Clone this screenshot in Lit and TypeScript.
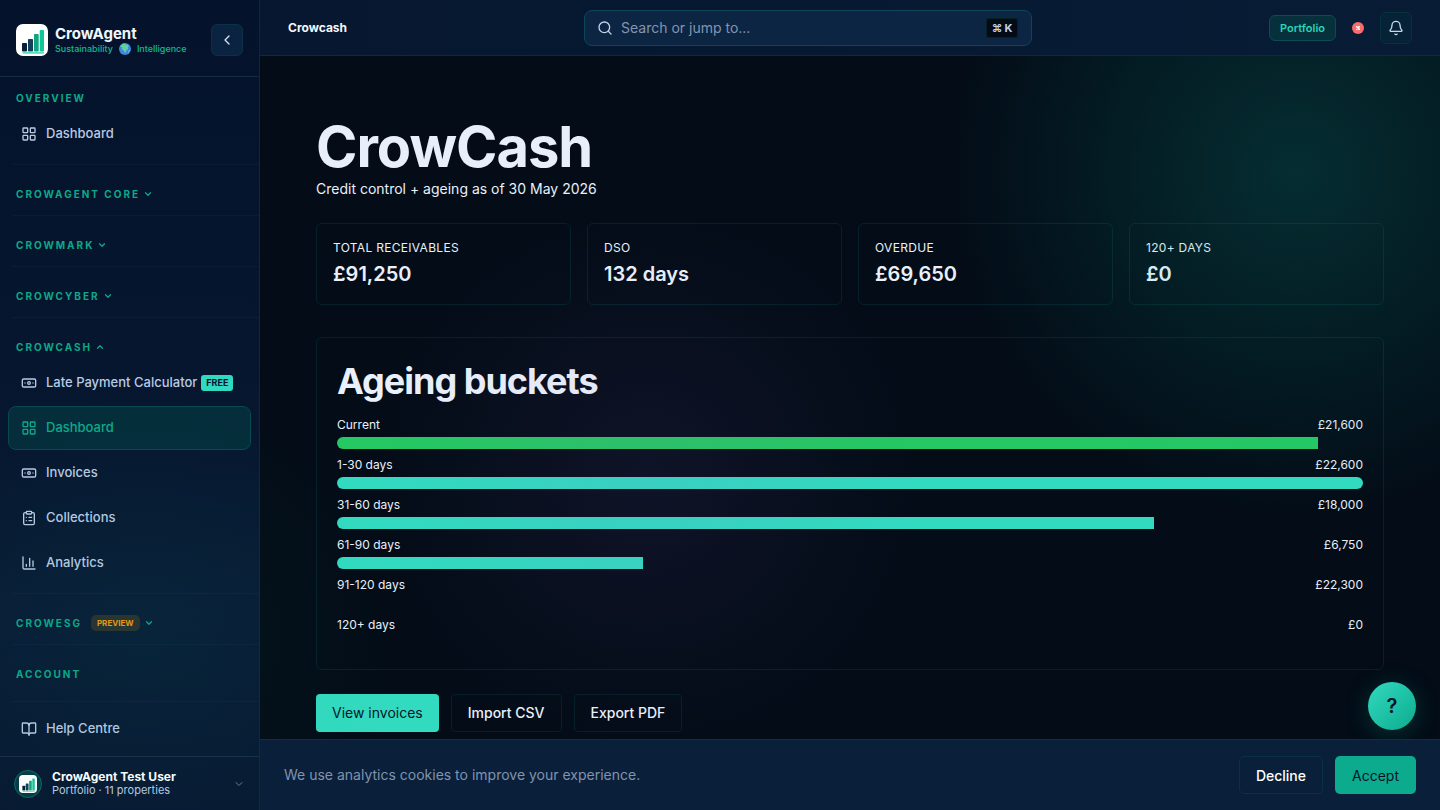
import { LitElement, html, css, svg } from "lit";
import { customElement } from "lit/decorators.js";
import { classMap } from "lit/directives/class-map.js";
import { styleMap } from "lit/directives/style-map.js";

const glyphs: Record<string, unknown> = {
  grid: svg`<rect x="3" y="3" width="7" height="7" rx="1"/><rect x="14" y="3" width="7" height="7" rx="1"/><rect x="14" y="14" width="7" height="7" rx="1"/><rect x="3" y="14" width="7" height="7" rx="1"/>`,
  banknote: svg`<rect width="20" height="12" x="2" y="6" rx="2"/><circle cx="12" cy="12" r="2"/><path d="M6 12h.01M18 12h.01"/>`,
  clipboard: svg`<rect width="8" height="4" x="8" y="2" rx="1"/><path d="M16 4h2a2 2 0 0 1 2 2v14a2 2 0 0 1-2 2H6a2 2 0 0 1-2-2V6a2 2 0 0 1 2-2h2"/><path d="M12 11h4M12 16h4M8 11h.01M8 16h.01"/>`,
  chart: svg`<path d="M3 3v16a2 2 0 0 0 2 2h16"/><path d="M18 17V9M13 17V5M8 17v-3"/>`,
  book: svg`<path d="M12 7v14"/><path d="M3 18a1 1 0 0 1-1-1V4a1 1 0 0 1 1-1h5a4 4 0 0 1 4 4 4 4 0 0 1 4-4h5a1 1 0 0 1 1 1v13a1 1 0 0 1-1 1h-6a3 3 0 0 0-3 3 3 3 0 0 0-3-3z"/>`,
  down: svg`<path d="m6 9 6 6 6-6"/>`,
  up: svg`<path d="m18 15-6-6-6 6"/>`,
  left: svg`<path d="m15 18-6-6 6-6"/>`,
  search: svg`<circle cx="11" cy="11" r="8"/><path d="m21 21-4.3-4.3"/>`,
  bell: svg`<path d="M10.3 21a1.94 1.94 0 0 0 3.4 0"/><path d="M3.26 15.33A1 1 0 0 0 4 17h16a1 1 0 0 0 .74-1.67C19.41 13.96 18 12.5 18 8A6 6 0 0 0 6 8c0 4.5-1.41 5.96-2.74 7.33"/>`,
};

const icon = (name: string, size = 16, stroke = 2) => html`<svg
  width=${size} height=${size} viewBox="0 0 24 24" fill="none" stroke="currentColor"
  stroke-width=${stroke} stroke-linecap="round" stroke-linejoin="round" aria-hidden="true"
>${glyphs[name]}</svg>`;

const logo = (size: number) => html`<svg width=${size} height=${size} viewBox="0 0 32 32" aria-hidden="true">
  <rect width="32" height="32" rx="7" fill="#fff"/>
  <rect x="6" y="19" width="5" height="8.500" rx="0.800" fill="#0a1f3a"/>
  <rect x="12" y="15" width="5" height="12.500" rx="0.800" fill="#12405a"/>
  <rect x="18" y="10" width="4.700" height="17.500" rx="0.800" fill="#0fa67f"/>
  <rect x="23.700" y="6" width="4.300" height="21.500" rx="0.800" fill="#12c49a"/>
  <rect x="6.500" y="27.800" width="21.500" height="2" rx="0.800" fill="#5fdcc0"/>
</svg>`;

const globe = html`<svg width="12" height="12" viewBox="0 0 12 12" aria-hidden="true">
  <circle cx="6" cy="6" r="6" fill="#3f86e4"/>
  <path d="M1 3.500 3.600.8 6 .6l1 1.200 1.500-.4 1.300 1.400-1 1.600L9 6.200 7.400 7.200 6.800 9.200 5.600 9.600 4.800 7.400 2.800 6.200 3.200 4.600z" fill="#62cfa0"/>
  <path d="M9.500 7.500l1.400-.8-.6 2.200-1.200.9z" fill="#62cfa0"/>
</svg>`;

const base = css`
  *, *::before, *::after { box-sizing: border-box; }
  button, a, input { font: inherit; color: inherit; text-decoration: none; }
  button { cursor: pointer; margin: 0; }
  svg { display: block; flex: none; }
  h1, h2, p, dl, dd, ul { margin: 0; padding: 0; }
`;

interface Item { label: string; icon: string; active?: boolean; badge?: string }
interface Section { title: string; state?: "open" | "closed"; tag?: string; items: Item[] }

const sections: Section[] = [
  { title: "Overview", items: [{ label: "Dashboard", icon: "grid" }] },
  { title: "CrowAgent Core", state: "closed", items: [] },
  { title: "CrowMark", state: "closed", items: [] },
  { title: "CrowCyber", state: "closed", items: [] },
  {
    title: "CrowCash", state: "open", items: [
      { label: "Late Payment Calculator", icon: "banknote", badge: "FREE" },
      { label: "Dashboard", icon: "grid", active: true },
      { label: "Invoices", icon: "banknote" },
      { label: "Collections", icon: "clipboard" },
      { label: "Analytics", icon: "chart" },
    ],
  },
  { title: "CrowESG", state: "closed", tag: "PREVIEW", items: [] },
  { title: "Account", items: [] },
];

@customElement("app-sidebar")
class AppSidebar extends LitElement {
  static styles = [base, css`
    :host {
      display: flex; flex-direction: column; min-height: 0;
      border-right: 1px solid #082b3b;
      background: linear-gradient(#04132b, #06172f 55%, #081c36 75%, #071932);
      color: #b9cae3;
    }
    .brand {
      display: flex; align-items: center; gap: 7px;
      height: 77px; padding: 3px 16px 0; flex: none;
      border-bottom: 1px solid #162b42;
    }
    .names { flex: 1; display: flex; flex-direction: column; }
    .name { font-size: 15px; line-height: 18px; font-weight: 700; color: #f1f6fd; }
    .tagline {
      display: flex; align-items: center; gap: 6px;
      font-size: 9px; line-height: 10px; font-weight: 500; color: #10b992;
      white-space: nowrap;
    }
    .collapse {
      display: grid; place-items: center; width: 32px; height: 32px; padding: 0;
      border: 1px solid #0d3048; border-radius: 6px; background: #0a2340; color: #d4e1f3;
    }
    nav { flex: 1; min-height: 0; overflow: hidden; padding-top: 8px; display: flex; flex-direction: column; }
    .section { padding: 0 8px 8px; position: relative; }
    .section + .section { padding-top: 17px; }
    .section + .section::before, .help::before {
      content: ""; position: absolute; top: 0; left: 12px; right: 0; height: 1px;
      background: rgba(20, 110, 130, 0.1);
    }
    .title {
      display: flex; align-items: center; height: 26px; width: 100%; padding: 0 8px;
      border: 0; background: none; text-align: left; text-transform: uppercase;
      font-size: 10px; font-weight: 700; letter-spacing: 2px; color: #0ca989;
    }
    button.title { gap: 3px; }
    .tag {
      padding: 0 6px; margin: 0 1px 0 6px; height: 16px; line-height: 16px; border-radius: 5px;
      background: #2b2f2c; color: #ee9a10; font-size: 8px; font-weight: 700; letter-spacing: 0;
    }
    .item {
      display: flex; align-items: center; gap: 9px; height: 44px; margin-top: 1px; padding: 0 12px;
      border: 1px solid transparent; border-radius: 8px;
      font-size: 13px; font-weight: 500; white-space: nowrap;
    }
    .label { padding-bottom: 2px; }
    .active { border-color: #07494f; background: #052d3b; color: #0caa8a; }
    .badge {
      margin-left: -5px; padding: 0 5px; height: 16px; line-height: 16px; border-radius: 3px;
      background: #30d9bf; color: #04142c; font-size: 9px; font-weight: 700;
    }
    .help { margin: auto 0 0; padding: 5px 8px; position: relative; }
    .user {
      display: flex; align-items: center; gap: 10px; width: 100%; height: 54px; flex: none;
      padding: 0 14px; border: 0; border-top: 1px solid #1a2f45; background: none; text-align: left;
    }
    .avatar {
      display: grid; place-items: center; width: 28px; height: 28px; border-radius: 50%;
      border: 1px solid #0a6a63; background: #073b45;
    }
    .who { flex: 1; display: flex; flex-direction: column; }
    .who strong { font-size: 12px; line-height: 14px; font-weight: 700; color: #fff; }
    .who small { font-size: 11px; line-height: 13px; }
    .user > svg { color: #667b93; }
  `];

  private item(i: Item) {
    return html`<a href="#" class=${classMap({ item: true, active: !!i.active })}>
      ${icon(i.icon)}<span class="label">${i.label}</span>
      ${i.badge ? html`<span class="badge">${i.badge}</span>` : ""}
    </a>`;
  }

  render() {
    return html`
      <div class="brand">
        ${logo(32)}
        <div class="names">
          <span class="name">CrowAgent</span>
          <span class="tagline">Sustainability ${globe} Intelligence</span>
        </div>
        <button class="collapse" aria-label="Collapse sidebar">${icon("left")}</button>
      </div>
      <nav aria-label="Main">
        ${sections.map((s) => html`<div class="section">
          ${s.state
            ? html`<button class="title" aria-expanded=${s.state === "open"}>
                <span>${s.title}</span>
                ${s.tag ? html`<span class="tag">${s.tag}</span>` : ""}
                ${icon(s.state === "open" ? "up" : "down", 10, 3)}
              </button>`
            : html`<div class="title">${s.title}</div>`}
          ${s.items.map((i) => this.item(i))}
        </div>`)}
        <div class="help">${this.item({ label: "Help Centre", icon: "book" })}</div>
      </nav>
      <button class="user">
        <span class="avatar">${logo(18)}</span>
        <span class="who"><strong>CrowAgent Test User</strong><small>Portfolio · 11 properties</small></span>
        ${icon("down", 12)}
      </button>`;
  }
}

@customElement("app-topbar")
class AppTopbar extends LitElement {
  static styles = [base, css`
    :host {
      display: flex; align-items: center; justify-content: space-between;
      height: 56px; padding: 0 28px; gap: 16px; position: relative; z-index: 1;
      border-bottom: 1px solid #0a2c3e; background: linear-gradient(90deg, #06172f, #081c35);
    }
    .page { font-size: 12px; font-weight: 700; color: #f4f8fe; }
    .search {
      display: flex; align-items: center; gap: 8px; height: 36px; padding: 0 13px 0 12px;
      flex: 0 1 448px; min-width: 0;
      border: 1px solid #0e4658; border-radius: 8px; background: #0c2543; color: #c3d2e6;
    }
    .search input {
      flex: 1; min-width: 0; padding: 0; border: 0; outline: 0; background: none; font-size: 14px;
    }
    .search input::placeholder { color: #8295b0; opacity: 1; }
    kbd {
      display: flex; align-items: center; justify-content: center; gap: 2px;
      min-width: 32px; height: 20px; border-radius: 3px; border: 1px solid #052120;
      background: #030b16; color: #c3d2e6;
      font: 700 11px/18px Inter, "DejaVu Sans", sans-serif;
    }
    .tools { display: flex; align-items: center; justify-content: flex-end; gap: 16px; }
    .plan {
      padding: 0 10px; height: 26px; line-height: 24px; border: 1px solid #0b4c53; border-radius: 6px;
      background: #07303d; color: #2bd4b4; font-size: 11px; font-weight: 600;
    }
    .status {
      display: grid; place-items: center; width: 12px; height: 12px; border-radius: 50%;
      background: #f96c6c; color: #fff;
    }
    .bell {
      display: grid; place-items: center; width: 32px; height: 32px; padding: 0;
      border: 1px solid #07323c; border-radius: 6px; background: #062237; color: #c9d7ea;
    }
  `];

  render() {
    return html`
      <span class="page">Crowcash</span>
      <label class="search">
        ${icon("search")}
        <input type="search" placeholder="Search or jump to..." aria-label="Search or jump to" />
        <kbd><span>⌘</span><span>K</span></kbd>
      </label>
      <div class="tools">
        <span class="plan">Portfolio</span>
        <span class="status" role="img" aria-label="Offline">
          <svg width="4" height="4" viewBox="0 0 4 4" stroke="currentColor" stroke-width="1.500"><path d="M0 0 4 4M4 0 0 4"/></svg>
        </span>
        <button class="bell" aria-label="Notifications">${icon("bell")}</button>
      </div>`;
  }
}

const stats = [
  ["Total receivables", "£91,250"],
  ["DSO", "132 days"],
  ["Overdue", "£69,650"],
  ["120+ days", "£0"],
];

const buckets = [
  { label: "Current", amount: 21600, share: 95.6, tone: "green" },
  { label: "1-30 days", amount: 22600, share: 100, tone: "teal" },
  { label: "31-60 days", amount: 18000, share: 79.6, tone: "teal" },
  { label: "61-90 days", amount: 6750, share: 29.8, tone: "teal" },
  { label: "91-120 days", amount: 22300, share: 0, tone: "teal" },
  { label: "120+ days", amount: 0, share: 0, tone: "teal" },
];

@customElement("cash-overview")
class CashOverview extends LitElement {
  static styles = [base, css`
    :host { display: block; padding: 60px 56px; overflow: hidden; color: #e9f0fa; }
    h1 { font-size: 56px; line-height: 62px; font-weight: 700; color: #e8effa; letter-spacing: -1px; }
    .lead { font-size: 14px; line-height: 22px; margin-bottom: 23px; }
    .stats { display: grid; grid-template-columns: repeat(4, 1fr); gap: 16px; margin-bottom: 32px; }
    .stat { padding: 16px; border: 1px solid #04212a; border-radius: 6px; }
    .stat dt { font-size: 12px; line-height: 16px; text-transform: uppercase; letter-spacing: 0.3px; }
    .stat dd { font-size: 20px; line-height: 28px; margin-top: 4px; font-weight: 600; }
    .panel { padding: 20px; border: 1px solid #04212a; border-radius: 6px; margin-bottom: 24px; }
    h2 { font-size: 36px; line-height: 46px; font-weight: 700; margin-bottom: 11px; letter-spacing: -1px; }
    ul { list-style: none; display: grid; gap: 6px; }
    .row { display: flex; justify-content: space-between; font-size: 12px; line-height: 20px; }
    .track { height: 12px; margin-top: 2px; border-radius: 6px; overflow: hidden; }
    .fill { height: 100%; }
    .green { background: #25c862; }
    .teal { background: #32dac0; }
    .actions { display: flex; gap: 12px; }
    .btn {
      display: flex; align-items: center; height: 38px; padding: 0 16px 1px; border-radius: 4px;
      border: 1px solid #04212a; background: none; font-size: 14px; font-weight: 500;
    }
    .primary {
      padding: 0 16px 2px; border: 0; background: #32dac0; color: #04142c; font-weight: 400;
    }
  `];

  render() {
    return html`
      <h1>CrowCash</h1>
      <p class="lead">Credit control + ageing as of 30 May 2026</p>
      <dl class="stats">
        ${stats.map(([k, v]) => html`<div class="stat"><dt>${k}</dt><dd>${v}</dd></div>`)}
      </dl>
      <section class="panel">
        <h2>Ageing buckets</h2>
        <ul>
          ${buckets.map((b) => html`<li>
            <div class="row"><span>${b.label}</span><span>£${b.amount.toLocaleString("en-GB")}</span></div>
            <div class="track">
              <div class=${"fill " + b.tone} style=${styleMap({ width: b.share + "%" })}></div>
            </div>
          </li>`)}
        </ul>
      </section>
      <div class="actions">
        <a class="btn primary" href="#">View invoices</a>
        <button class="btn">Import CSV</button>
        <button class="btn">Export PDF</button>
      </div>`;
  }
}

@customElement("app-root")
class AppRoot extends LitElement {
  static styles = [base, css`
    :host {
      display: grid; grid-template-columns: 260px minmax(0, 1fr); height: 100vh; overflow: hidden;
      position: relative; background: #030c17; color: #e9f0fa;
      font-family: Inter, "Open Sans", sans-serif; font-size: 14px;
    }
    .main { display: grid; grid-template-rows: 56px minmax(0, 1fr) auto; min-width: 0; min-height: 0; }
    .cookies {
      display: flex; align-items: center; gap: 12px; padding: 16px 24px; position: relative; z-index: 1;
      border-top: 1px solid #0b3144; background: #0a1f3a; color: #8193ae;
    }
    .cookies p { flex: 1; line-height: 20px; }
    .btn { height: 38px; padding: 0 17px; border-radius: 5px; font-size: 14px; font-weight: 500; }
    .decline { border: 1px solid #0a3044; background: none; color: #fff; padding: 0 16px; }
    .accept { border: 0; background: #0cab8d; color: #04142c; font-weight: 400; }
    .fab {
      position: absolute; right: 24px; bottom: 80px; width: 48px; height: 48px; padding: 0;
      border: 0; border-radius: 50%; background: linear-gradient(135deg, #32dac0, #0cab8d);
      color: #04142c; font-size: 20px; font-weight: 600;
      box-shadow: 0 4px 24px rgba(12, 171, 141, 0.25);
    }
    .glow {
      position: absolute; inset: 0; pointer-events: none;
      background:
        radial-gradient(circle at 90% 21%, rgba(12, 190, 165, 0.19), transparent 350px),
        radial-gradient(circle at 45% 59%, rgba(139, 92, 206, 0.09), transparent 270px),
        radial-gradient(circle at 10% 79%, rgba(12, 150, 118, 0.07), transparent 260px);
    }
  `];

  render() {
    return html`
      <app-sidebar></app-sidebar>
      <div class="main">
        <app-topbar></app-topbar>
        <cash-overview></cash-overview>
        <div class="cookies" role="region" aria-label="Cookie consent">
          <p>We use analytics cookies to improve your experience.</p>
          <button class="btn decline">Decline</button>
          <button class="btn accept">Accept</button>
        </div>
      </div>
      <div class="glow"></div>
      <button class="fab" aria-label="Help">?</button>`;
  }
}
